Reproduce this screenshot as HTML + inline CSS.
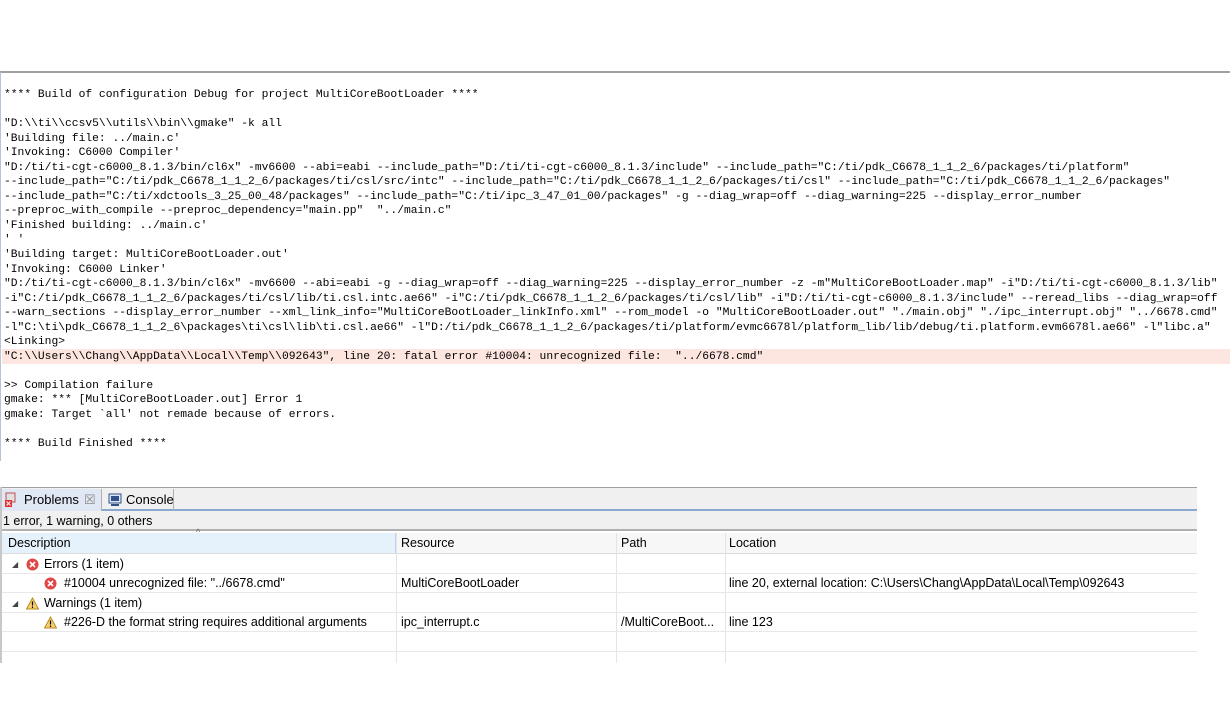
<!DOCTYPE html>
<html><head><meta charset="utf-8"><style>
*{margin:0;padding:0;box-sizing:border-box}
body{width:1230px;height:715px;background:#fff;position:relative;overflow:hidden}
#con{position:absolute;left:0;top:71px;width:1230px;height:390px;border-top:2px solid #a0a0a0;border-left:1px solid #b8c4d6}
pre{position:absolute;left:3px;top:15px;font-family:"Liberation Mono",monospace;font-size:11.3px;line-height:14.54px;color:#000;white-space:pre}
.err{position:absolute;left:1px;top:276px;width:1229px;height:15px;background:#fde6e0}
#pan{position:absolute;left:0;top:487px;width:1197px;height:176px;border-left:2px solid #c8c8c8;font-family:"Liberation Sans",sans-serif;font-size:12.5px;color:#000}
.tabs{height:24px;background:#f0f0f0;border-top:1px solid #a0a0a0;border-bottom:2px solid #8aa8d0;position:relative;font-size:13px}
.tab{position:absolute;top:1px;height:22px;line-height:22px}
.stat{height:20px;line-height:20px;background:#f0f0f0;border-bottom:2px solid #b0b0b0;padding-left:1px}
.hdr{position:absolute;top:46px;left:0;width:1195px;height:21px;background:#f7f7f7;border-bottom:1px solid #dcdcdc}
.row{position:absolute;left:0;width:1195px;height:20px;border-bottom:1px solid #e8e8e8;line-height:21px}
.c{position:absolute;top:0;height:100%;white-space:nowrap}
.vl{position:absolute;top:46px;width:1px;height:130px;background:#e4e4e4}
svg.i{position:absolute;top:4px}
</style></head><body>
<div id="con">
<div class="err"></div>
<pre>**** Build of configuration Debug for project MultiCoreBootLoader ****

"D:\\ti\\ccsv5\\utils\\bin\\gmake" -k all
'Building file: ../main.c'
'Invoking: C6000 Compiler'
"D:/ti/ti-cgt-c6000_8.1.3/bin/cl6x" -mv6600 --abi=eabi --include_path="D:/ti/ti-cgt-c6000_8.1.3/include" --include_path="C:/ti/pdk_C6678_1_1_2_6/packages/ti/platform"
--include_path="C:/ti/pdk_C6678_1_1_2_6/packages/ti/csl/src/intc" --include_path="C:/ti/pdk_C6678_1_1_2_6/packages/ti/csl" --include_path="C:/ti/pdk_C6678_1_1_2_6/packages"
--include_path="C:/ti/xdctools_3_25_00_48/packages" --include_path="C:/ti/ipc_3_47_01_00/packages" -g --diag_wrap=off --diag_warning=225 --display_error_number
--preproc_with_compile --preproc_dependency="main.pp"  "../main.c"
'Finished building: ../main.c'
' '
'Building target: MultiCoreBootLoader.out'
'Invoking: C6000 Linker'
"D:/ti/ti-cgt-c6000_8.1.3/bin/cl6x" -mv6600 --abi=eabi -g --diag_wrap=off --diag_warning=225 --display_error_number -z -m"MultiCoreBootLoader.map" -i"D:/ti/ti-cgt-c6000_8.1.3/lib"
-i"C:/ti/pdk_C6678_1_1_2_6/packages/ti/csl/lib/ti.csl.intc.ae66" -i"C:/ti/pdk_C6678_1_1_2_6/packages/ti/csl/lib" -i"D:/ti/ti-cgt-c6000_8.1.3/include" --reread_libs --diag_wrap=off
--warn_sections --display_error_number --xml_link_info="MultiCoreBootLoader_linkInfo.xml" --rom_model -o "MultiCoreBootLoader.out" "./main.obj" "./ipc_interrupt.obj" "../6678.cmd"
-l"C:\ti\pdk_C6678_1_1_2_6\packages\ti\csl\lib\ti.csl.ae66" -l"D:/ti/pdk_C6678_1_1_2_6/packages/ti/platform/evmc6678l/platform_lib/lib/debug/ti.platform.evm6678l.ae66" -l"libc.a"
&lt;Linking&gt;
"C:\\Users\\Chang\\AppData\\Local\\Temp\\092643", line 20: fatal error #10004: unrecognized file:  "../6678.cmd"

&gt;&gt; Compilation failure
gmake: *** [MultiCoreBootLoader.out] Error 1
gmake: Target `all' not remade because of errors.

**** Build Finished ****</pre>
</div>
<div id="pan">
<div class="tabs">
 <div class="tab" style="left:0;width:100px;background:#dfe8f4;border-right:1px solid #b0b0b0">
  <svg style="position:absolute;left:2px;top:3px" width="14" height="16"><rect x="2" y="1" width="9" height="9" fill="#e0e0e0" stroke="#c05050"/><rect x="1" y="8" width="7" height="7" fill="#e03030"/><path d="M2.5 9.5l4 4M6.5 9.5l-4 4" stroke="#fff"/></svg>
  <span style="position:absolute;left:22px">Problems</span><span style="position:absolute;left:82px;color:#888">☒</span></div>
 <div class="tab" style="left:101px;width:71px;border-right:1px solid #b0b0b0">
  <svg style="position:absolute;left:5px;top:4px" width="14" height="14"><rect x="1" y="1" width="12" height="9" fill="#dce8f8" stroke="#30508a"/><rect x="3" y="3" width="8" height="5" fill="#30508a"/><rect x="3" y="11" width="8" height="2" fill="#30508a"/></svg>
  <span style="position:absolute;left:23px">Console</span></div>
</div>
<div class="stat">1 error, 1 warning, 0 others</div>
<div class="hdr"><div class="c" style="left:0;width:394px;background:#e5f1fb;border-right:1px solid #b8d4ee"></div>
 <span class="c" style="left:6px;line-height:21px">Description</span><span class="c" style="left:194px;top:-6px;font-size:9px;color:#666">^</span>
 <span class="c" style="left:399px;line-height:21px">Resource</span><span class="c" style="left:619px;line-height:21px">Path</span><span class="c" style="left:727px;line-height:21px">Location</span></div>
<div class="vl" style="left:394px"></div><div class="vl" style="left:614px"></div><div class="vl" style="left:723px"></div>
<div class="row" style="top:67px"><span class="c" style="left:10px;font-size:8px;color:#444">◢</span>
 <svg class="i" style="left:24px" width="13" height="13"><circle cx="6.5" cy="6.5" r="6" fill="#e04848"/><path d="M4 4l5 5M9 4l-5 5" stroke="#fff" stroke-width="1.6"/></svg>
 <span class="c" style="left:42px">Errors (1 item)</span></div>
<div class="row" style="top:86px">
 <svg class="i" style="left:42px" width="13" height="13"><circle cx="6.5" cy="6.5" r="6" fill="#e04848"/><path d="M4 4l5 5M9 4l-5 5" stroke="#fff" stroke-width="1.6"/></svg>
 <span class="c" style="left:62px">#10004 unrecognized file:  "../6678.cmd"</span><span class="c" style="left:399px">MultiCoreBootLoader</span><span class="c" style="left:727px">line 20, external location: C:\Users\Chang\AppData\Local\Temp\092643</span></div>
<div class="row" style="top:106px"><span class="c" style="left:10px;font-size:8px;color:#444">◢</span>
 <svg class="i" style="left:24px" width="13" height="13"><path d="M6.5 1L12.5 12H0.5Z" fill="#f6d070" stroke="#b88a20"/><path d="M6.5 4.5v4M6.5 9.5v1.5" stroke="#000" stroke-width="1.2"/></svg>
 <span class="c" style="left:42px">Warnings (1 item)</span></div>
<div class="row" style="top:125px">
 <svg class="i" style="left:42px" width="13" height="13"><path d="M6.5 1L12.5 12H0.5Z" fill="#f6d070" stroke="#b88a20"/><path d="M6.5 4.5v4M6.5 9.5v1.5" stroke="#000" stroke-width="1.2"/></svg>
 <span class="c" style="left:62px">#226-D the format string requires additional arguments</span><span class="c" style="left:399px">ipc_interrupt.c</span><span class="c" style="left:619px">/MultiCoreBoot...</span><span class="c" style="left:727px">line 123</span></div>
<div class="row" style="top:145px"></div>
</div>
</body></html>
